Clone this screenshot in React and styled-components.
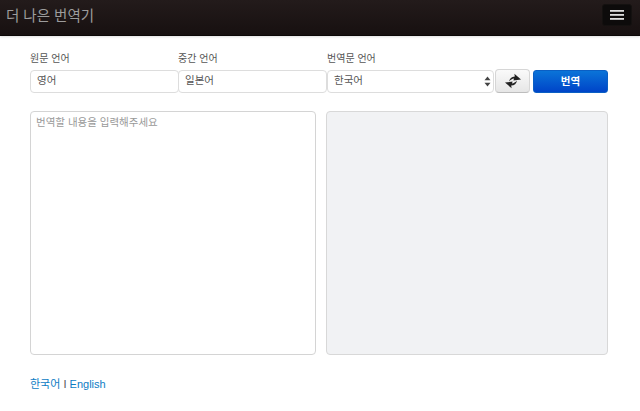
import React from "react";
import styled, { createGlobalStyle } from "styled-components";

const GlobalStyle = createGlobalStyle`
  html, body {
    margin: 0;
    padding: 0;
    background: #ffffff;
  }
  * {
    box-sizing: border-box;
  }
  body {
    font-family: "Liberation Sans", "Noto Sans CJK KR", sans-serif;
    color: #333333;
  }
`;

function App() {
  return (
    <>
      <GlobalStyle />
      <Navbar>
        <Brand>더 나은 번역기</Brand>
        <MenuToggle aria-label="menu">
          <MenuBar />
          <MenuBar />
          <MenuBar />
        </MenuToggle>
      </Navbar>
      <Main>
        <Controls>
          <Field w="148px">
            <Label>원문 언어</Label>
            <Select first defaultValue="en">
              <option value="en">영어</option>
            </Select>
          </Field>
          <Field w="149px">
            <Label>중간 언어</Label>
            <Select defaultValue="ja">
              <option value="ja">일본어</option>
            </Select>
          </Field>
          <Field w="167px">
            <Label>번역문 언어</Label>
            <SelectWrap>
              <Select defaultValue="ko">
                <option value="ko">한국어</option>
              </Select>
              <Arrows width="7" height="11" viewBox="0 0 7 11">
                <path d="M3.5 0.5 L6.5 4.2 L0.5 4.2 Z" fill="#444" />
                <path d="M3.5 10.5 L6.5 6.8 L0.5 6.8 Z" fill="#444" />
              </Arrows>
            </SelectWrap>
          </Field>
          <SwapButton aria-label="swap">
            <svg width="18" height="16" viewBox="0 0 18 16">
              <path
                d="M5 8.6 C5.4 5.6 7.6 3.6 10.8 3.4 L10.4 0.8 L17 6.4 L9.4 7.4 L10 5.6 C8.2 5.8 6.6 6.8 5 8.6 Z"
                fill="#222"
              />
              <path
                d="M13 7.4 C12.6 10.4 10.4 12.4 7.2 12.6 L7.6 15.2 L1 9.6 L8.6 8.6 L8 10.4 C9.8 10.2 11.4 9.2 13 7.4 Z"
                fill="#222"
              />
            </svg>
          </SwapButton>
          <TranslateButton>번역</TranslateButton>
        </Controls>
        <Panels>
          <Source placeholder="번역할 내용을 입력해주세요" />
          <Result />
        </Panels>
        <Footer>
          <FooterLink href="#ko">한국어</FooterLink> <Separator>I</Separator> <FooterLink href="#en">English</FooterLink>
        </Footer>
      </Main>
    </>
  );
}

export default App;

const Navbar = styled.header`
  height: 36px;
  padding: 0 8px 0 6px;
  display: flex;
  align-items: center;
  justify-content: space-between;
  background: linear-gradient(#231b1b, #171010);
  border-bottom: 1px solid #0c0807;
  box-shadow: 0 1px 2px rgba(0, 0, 0, 0.12);
`;

const Brand = styled.div`
  font-size: 14.5px;
  color: #9c9c9c;
  margin-top: -6px;
`;

const MenuToggle = styled.button`
  width: 30px;
  height: 22px;
  margin-top: -5px;
  padding: 0;
  border: 1px solid #141110;
  border-radius: 3px;
  background: #0d0b0b;
  display: flex;
  flex-direction: column;
  align-items: center;
  justify-content: center;
  gap: 2px;
`;

const MenuBar = styled.span`
  display: block;
  width: 14px;
  height: 2px;
  background: linear-gradient(#f4f4f4, #9a9a9a);
`;

const Main = styled.main`
  padding: 15px 32px 0 30px;
`;

const Controls = styled.div`
  display: flex;
  align-items: flex-end;
`;

const Field = styled.div`
  width: ${(props) => props.w};
  flex: none;
  display: flex;
  flex-direction: column;
`;

const Label = styled.label`
  font-size: 10px;
  line-height: 14px;
  padding-top: 1px;
  margin-bottom: 4px;
  color: #555555;
`;

const SelectWrap = styled.div`
  position: relative;
`;

const Select = styled.select`
  appearance: none;
  width: ${(props) => (props.first ? "149px" : "100%")};
  height: 23px;
  padding: 0 6px 3px;
  font: 10.5px "Liberation Sans", "Noto Sans CJK KR", sans-serif;
  color: #555555;
  background: #ffffff;
  border: 1px solid #dddddd;
  border-radius: 4px;
`;

const Arrows = styled.svg`
  position: absolute;
  right: 3px;
  top: 6px;
`;

const SwapButton = styled.button`
  width: 35px;
  height: 24px;
  margin-left: 1px;
  padding: 0;
  display: flex;
  align-items: center;
  justify-content: center;
  background: linear-gradient(#fafafa, #e6e6e6);
  border: 1px solid #d6d6d6;
  border-bottom-color: #bdbdbd;
  border-radius: 4px;
`;

const TranslateButton = styled.button`
  width: 75px;
  height: 23px;
  margin-left: 3px;
  padding: 0 0 2px;
  font: bold 10.5px "Liberation Sans", "Noto Sans CJK KR", sans-serif;
  color: #ffffff;
  background: linear-gradient(#0a74d8, #0044c8);
  border: 1px solid #0a5fc4;
  border-radius: 3px;
`;

const Panels = styled.div`
  display: flex;
  gap: 10px;
  margin-top: 18px;
`;

const Source = styled.textarea`
  width: 286px;
  height: 244px;
  padding: 2px 5px;
  resize: none;
  font: 10.5px "Liberation Sans", "Noto Sans CJK KR", sans-serif;
  background: #ffffff;
  border: 1px solid #d4d4d4;
  border-radius: 4px;
  &::placeholder {
    color: #999999;
    opacity: 1;
  }
`;

const Result = styled.div`
  width: 282px;
  height: 244px;
  background: #f1f2f4;
  border: 1px solid #d8d8d8;
  border-radius: 4px;
`;

const Footer = styled.footer`
  margin-top: 22px;
  font-size: 11px;
  line-height: 14px;
`;

const FooterLink = styled.a`
  color: #0d7cc4;
  text-decoration: none;
`;

const Separator = styled.span`
  color: #555555;
`;
